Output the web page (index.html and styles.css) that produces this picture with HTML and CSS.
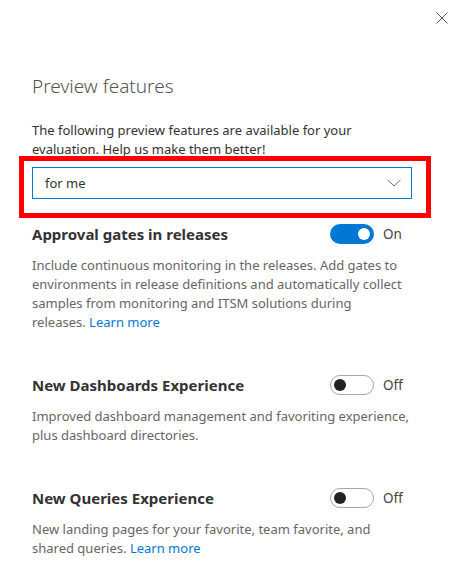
FILE: index.html
```html
<!DOCTYPE html>
<html lang="en">
<head>
<meta charset="utf-8">
<title>Preview features</title>
<link rel="stylesheet" href="styles.css">
</head>
<body>
<div class="panel">
  <div class="topbar">
    <button class="close" aria-label="Close">
      <svg width="12" height="12" viewBox="0 0 12 12"><path d="M0.5 0.5 L11.5 11.5 M11.5 0.5 L0.5 11.5" stroke="#555" stroke-width="1" fill="none"/></svg>
    </button>
  </div>
  <h1 class="title">Preview features</h1>
  <p class="intro">The following preview features are available for your evaluation. Help us make them better!</p>
  <div class="select-wrap">
    <div class="select">
      <span class="select-value">for me</span>
      <svg class="chevron" width="14" height="8" viewBox="0 0 14 8"><path d="M0.5 0.8 L7 7 L13.5 0.8" stroke="#707070" stroke-width="1" fill="none"/></svg>
    </div>
    <div class="highlight"></div>
  </div>

  <div class="feature">
    <div class="feature-head">
      <span class="feature-name">Approval gates in releases</span>
      <div class="toggle-group">
        <span class="toggle on"><span class="knob"></span></span>
        <span class="toggle-label">On</span>
      </div>
    </div>
    <p class="feature-desc narrow">Include continuous monitoring in the releases. Add gates to environments in release definitions and automatically collect samples from monitoring and ITSM solutions during releases. <a href="#" class="link">Learn more</a></p>
  </div>

  <div class="feature">
    <div class="feature-head">
      <span class="feature-name">New Dashboards Experience</span>
      <div class="toggle-group">
        <span class="toggle off"><span class="knob"></span></span>
        <span class="toggle-label">Off</span>
      </div>
    </div>
    <p class="feature-desc">Improved dashboard management and favoriting experience, plus dashboard directories.</p>
  </div>

  <div class="feature">
    <div class="feature-head">
      <span class="feature-name">New Queries Experience</span>
      <div class="toggle-group">
        <span class="toggle off"><span class="knob"></span></span>
        <span class="toggle-label">Off</span>
      </div>
    </div>
    <p class="feature-desc">New landing pages for your favorite, team favorite, and shared queries. <a href="#" class="link">Learn more</a></p>
  </div>
</div>
</body>
</html>
```

FILE: styles.css
```css
html, body {
  margin: 0;
  padding: 0;
  background: #ffffff;
}
body {
  font-family: "Noto Sans", "Open Sans", sans-serif;
  color: #333333;
  width: 464px;
  height: 587px;
  overflow: hidden;
}
.panel {
  padding: 0 52px 0 32px;
}
.topbar {
  display: flex;
  justify-content: flex-end;
  height: 12px;
  padding-top: 12px;
  margin-right: -36px;
}
.close {
  width: 12px;
  height: 12px;
  padding: 0;
  border: 0;
  background: none;
  display: block;
}
.close svg { display: block; }
.title {
  margin: 48px 0 0 0;
  font-size: 19px;
  font-weight: 300;
  line-height: 28px;
  color: #555555;
}
.intro {
  margin: 21px 0 0 0;
  font-size: 13px;
  line-height: 18.67px;
  color: #333333;
}
.select-wrap {
  position: relative;
  margin-top: 9px;
}
.select {
  box-sizing: border-box;
  height: 32px;
  border: 1px solid #0078d4;
  display: flex;
  align-items: center;
  justify-content: space-between;
  padding: 0 10px 0 12px;
}
.select-value {
  font-size: 13px;
  color: #333333;
}
.chevron { display: block; }
.highlight {
  position: absolute;
  top: -11px;
  left: -13px;
  right: -19px;
  bottom: -19px;
  border: 5px solid #ff0000;
  pointer-events: none;
}
.feature {
  margin-top: 25px;
}
.feature + .feature {
  margin-top: 43px;
}
.feature-head {
  display: flex;
  align-items: center;
  justify-content: space-between;
  height: 20px;
}
.feature-name {
  font-size: 15px;
  font-weight: 700;
  color: #333333;
}
.toggle-group {
  display: flex;
  align-items: center;
  width: 82px;
  gap: 9px;
}
.toggle {
  box-sizing: border-box;
  width: 44px;
  height: 20px;
  border-radius: 10px;
  display: flex;
  align-items: center;
  padding: 0 4px;
}
.toggle.on {
  background: #0078d4;
  justify-content: flex-end;
}
.toggle.off {
  background: #ffffff;
  border: 1px solid #a6a6a6;
  justify-content: flex-start;
  padding: 0 3px;
}
.knob {
  width: 12px;
  height: 12px;
  border-radius: 50%;
}
.toggle.on .knob { background: #ffffff; }
.toggle.off .knob { background: #222222; }
.toggle-label {
  font-size: 13.5px;
  color: #444444;
}
.feature-desc {
  margin: 12px 0 0 0;
  font-size: 13px;
  line-height: 19px;
  color: #666666;
}
.feature-desc.narrow {
  max-width: 372px;
}
.link {
  color: #0078d4;
  text-decoration: none;
}
```
